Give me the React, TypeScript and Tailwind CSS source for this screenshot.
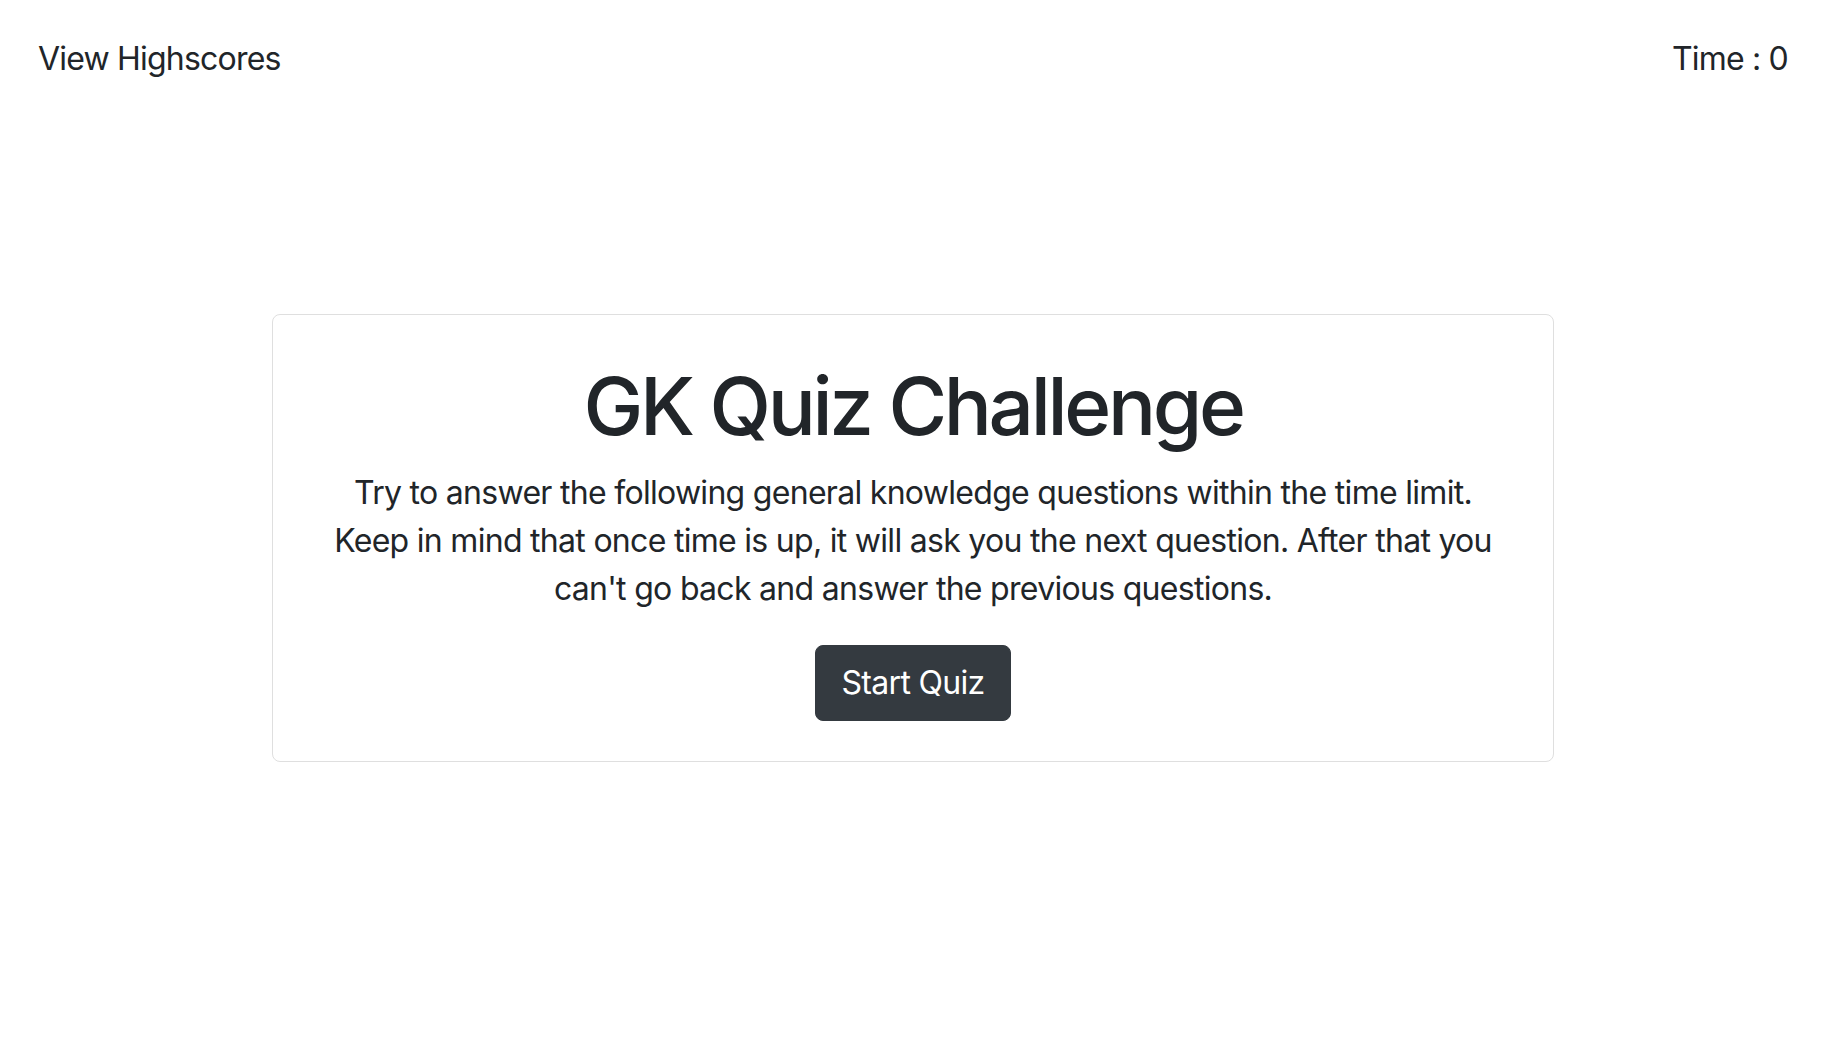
export default function App() {
  return (
    <div className="min-h-screen bg-white text-[#212529]" style={{ fontFamily: 'Inter, "Noto Sans", sans-serif' }}>
      {/* Header */}
      <div className="flex items-center justify-between px-[38px] pt-[35px] text-[32px] leading-[48px] tracking-[-0.025em]">
        <a className="cursor-pointer">View Highscores</a>
        <div>Time : 0</div>
      </div>

      {/* Intro card */}
      <div className="mx-auto mt-[231px] w-[1282px] rounded-lg border border-[#dfdfdf] p-10 text-center">
        <h1 className="mb-[15px] pt-[3px] text-[80px] font-medium leading-[96px] tracking-[-0.042em]">GK Quiz Challenge</h1>
        <p className="mb-8 text-[32px] leading-[48px] tracking-[-0.022em]">
          Try to answer the following general knowledge questions within the time limit. Keep in mind that once time is up, it will ask you the next question. After that you can't go back and answer the previous questions.
        </p>
        <button className="h-[76px] rounded-lg border border-[#343a40] bg-[#343a40] px-[26px] text-[32px] tracking-[-0.022em] text-white">
          Start Quiz
        </button>
      </div>
    </div>
  )
}
